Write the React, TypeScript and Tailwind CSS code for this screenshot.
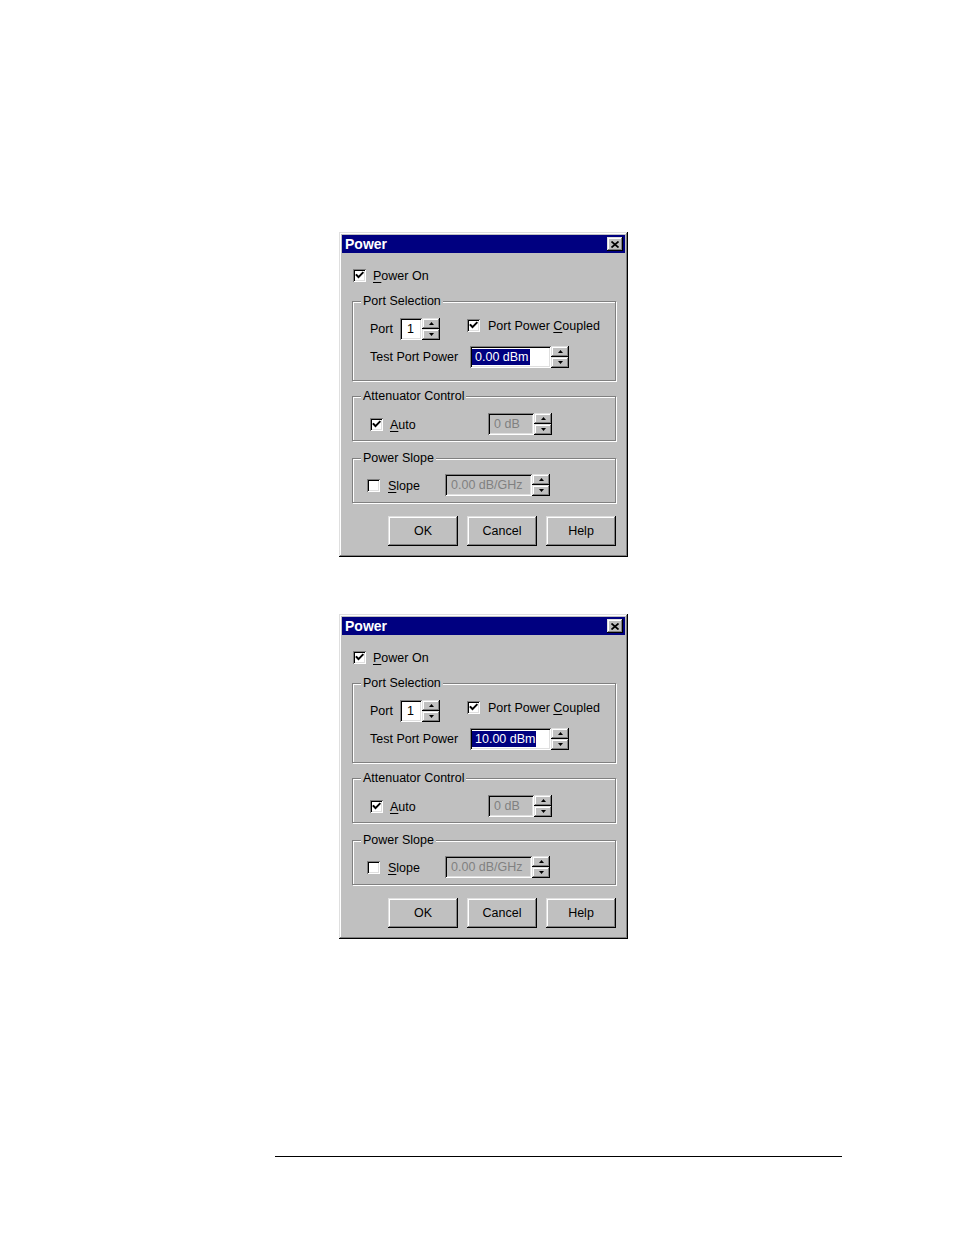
import React from "react";

const raised =
  "shadow-[inset_-1px_-1px_0_#000,inset_1px_1px_0_#dfdfdf,inset_-2px_-2px_0_#808080,inset_2px_2px_0_#fff]";
const sunken =
  "shadow-[inset_1px_1px_0_#808080,inset_-1px_-1px_0_#fff,inset_2px_2px_0_#000,inset_-2px_-2px_0_#dfdfdf]";

function Check({ checked }: { checked: boolean }) {
  return (
    <div className={`w-[13px] h-[13px] bg-white shrink-0 flex items-center justify-center ${sunken}`}>
      {checked && (
        <svg width="13" height="13" viewBox="0 0 13 13">
          <polyline points="3.5,6 5.5,8.2 9.7,3.8" fill="none" stroke="#000" strokeWidth="1.9" strokeLinecap="square" />
        </svg>
      )}
    </div>
  );
}

function Spinner() {
  const half = `h-[11px] w-[18px] bg-[#c0c0c0] flex items-center justify-center ${raised}`;
  return (
    <div className="flex flex-col w-[18px] h-[22px] shrink-0">
      <div className={half}>
        <svg width="5" height="3" viewBox="0 0 5 3">
          <polygon points="2.5,0 5,3 0,3" fill="#000" />
        </svg>
      </div>
      <div className={half}>
        <svg width="5" height="3" viewBox="0 0 5 3">
          <polygon points="0,0 5,0 2.5,3" fill="#000" />
        </svg>
      </div>
    </div>
  );
}

function Frame({ label, h, children, pt, pl }: { label: string; h: string; children: React.ReactNode; pt: string; pl: string }) {
  return (
    <div
      className={`relative w-[264px] ${h} border border-[#808080] shadow-[inset_1px_1px_0_#fff,1px_1px_0_#fff] ${pt} ${pl}`}
    >
      <span className="absolute -top-[9px] left-[8px] px-[2px] bg-[#c0c0c0] leading-[16px] text-black">{label}</span>
      {children}
    </div>
  );
}

function U({ c }: { c: string }) {
  return <span className="underline underline-offset-[2px]">{c}</span>;
}

function Button({ label }: { label: string }) {
  return (
    <div className={`w-[70px] h-[30px] bg-[#c0c0c0] flex items-center justify-center text-black ${raised}`}>
      {label}
    </div>
  );
}

function Dialog({ value }: { value: string }) {
  return (
    <div className={`w-[289px] h-[325px] bg-[#c0c0c0] p-[3px] flex flex-col ${raised}`}>
      <div className="h-[18px] bg-[#000080] flex items-center justify-between pl-[3px] pr-[2px]">
        <span className="text-white font-bold text-[14px] leading-[18px]">Power</span>
        <div className={`w-[16px] h-[14px] bg-[#c0c0c0] flex items-center justify-center ${raised}`}>
          <svg width="8" height="7" viewBox="0 0 8 7">
            <path d="M0.5 0.5 L7.5 6.5 M7.5 0.5 L0.5 6.5" stroke="#000" strokeWidth="1.7" />
          </svg>
        </div>
      </div>
      <div className="pl-[10px] flex flex-col">
        <div className="mt-[16px] h-[13px] flex items-center pl-[1px] gap-[7px]">
          <Check checked />
          <span className="leading-[13px] relative top-[1px]">
            <U c="P" />
            ower On
          </span>
        </div>

        <div className="mt-[19px]">
          <Frame label="Port Selection" h="h-[80px]" pt="pt-[16px]" pl="pl-[17px]">
            <div className="flex h-[22px]">
              <span className="w-[30px] leading-[22px]">Port</span>
              <div className={`w-[22px] h-[22px] bg-white flex items-center pl-[7px] ${sunken}`}>1</div>
              <Spinner />
              <div className="ml-[27px] mt-[1px] h-[13px] flex items-center gap-[8px]">
                <Check checked />
                <span className="leading-[13px] relative top-[1px]">
                  Port Power <U c="C" />
                  oupled
                </span>
              </div>
            </div>
            <div className="flex h-[22px] mt-[6px]">
              <span className="w-[100px] leading-[22px]">Test Port Power</span>
              <div className={`w-[81px] h-[22px] bg-white flex items-center pl-[2px] ${sunken}`}>
                <span className="bg-[#000080] text-white leading-[16px] pl-[3px] pr-[1px]">{value}</span>
              </div>
              <Spinner />
            </div>
          </Frame>
        </div>

        <div className="mt-[15px]">
          <Frame label="Attenuator Control" h="h-[45px]" pt="pt-[16px]" pl="pl-[17px]">
            <div className="flex h-[22px] items-center">
              <div className="w-[118px] flex items-center gap-[7px]">
                <Check checked />
                <span className="leading-[13px] relative top-[1px]">
                  <U c="A" />
                  uto
                </span>
              </div>
              <div className={`w-[46px] h-[22px] bg-[#c0c0c0] flex items-center pl-[6px] text-[#808080] ${sunken}`}>
                0 dB
              </div>
              <Spinner />
            </div>
          </Frame>
        </div>

        <div className="mt-[17px]">
          <Frame label="Power Slope" h="h-[45px]" pt="pt-[15px]" pl="pl-[14px]">
            <div className="flex h-[22px] items-center">
              <div className="w-[78px] flex items-center gap-[8px]">
                <Check checked={false} />
                <span className="leading-[13px] relative top-[1px]">
                  <U c="S" />
                  lope
                </span>
              </div>
              <div className={`w-[87px] h-[22px] bg-[#c0c0c0] flex items-center pl-[6px] text-[#808080] ${sunken}`}>
                0.00 dB/GHz
              </div>
              <Spinner />
            </div>
          </Frame>
        </div>

        <div className="mt-[13px] w-[264px] flex justify-end gap-[9px]">
          <Button label="OK" />
          <Button label="Cancel" />
          <Button label="Help" />
        </div>
      </div>
    </div>
  );
}

export default function App() {
  return (
    <div className="w-[954px] h-[1235px] bg-white font-['Liberation_Sans',Arial,sans-serif] text-[12.5px] text-black">
      <div className="pt-[232px] pl-[339px] flex flex-col gap-[57px]">
        <Dialog value="0.00 dBm" />
        <Dialog value="10.00 dBm" />
      </div>
      <div className="mt-[217px] ml-[275px] w-[567px] h-[1px] bg-black" />
    </div>
  );
}
